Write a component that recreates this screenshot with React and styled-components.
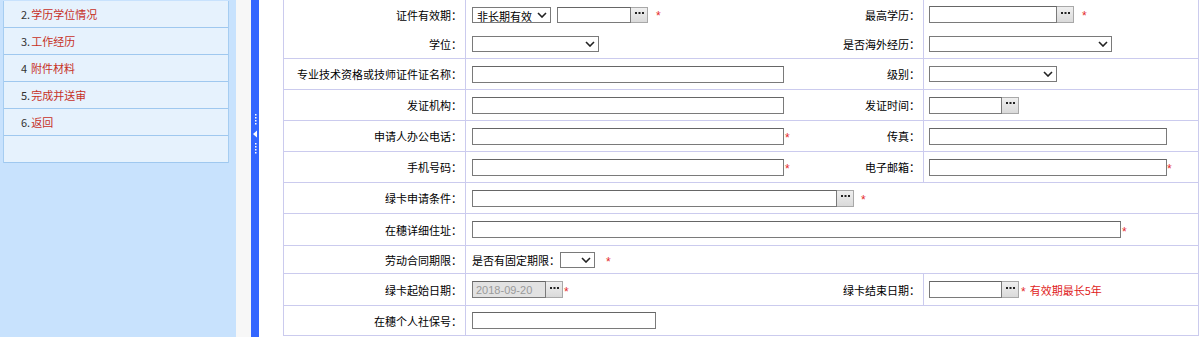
import React from "react";
import styled, { createGlobalStyle } from "styled-components";

const GlobalStyle = createGlobalStyle`
  html, body, #root {
    margin: 0;
    padding: 0;
    height: 100%;
  }
  body {
    background: #fff;
    font-family: "SimSun", "Noto Sans CJK SC", "Liberation Sans", sans-serif;
    font-size: 11px;
    color: #000;
    overflow: hidden;
  }
  * {
    box-sizing: border-box;
  }
`;

const Page = styled.div`
  display: flex;
  height: 337px;
`;

const SidePanel = styled.div`
  width: 236px;
  flex-shrink: 0;
  background: #c8e2fd;
  padding-left: 3px;
`;

const Menu = styled.ul`
  list-style: none;
  margin: 1px 0 0;
  padding: 0;
  width: 226px;
  border-left: 1px solid #a6cdf1;
  border-right: 1px solid #a6cdf1;
`;

const MenuItem = styled.li`
  height: 27px;
  display: flex;
  align-items: center;
  padding-left: 17px;
  background: #e6f2fd;
  border-bottom: 1px solid #9fc8ef;
  cursor: pointer;
`;

const MenuNo = styled.span`
  color: #333;
  margin-right: ${(p) => (p.$wide ? 4 : 1)}px;
`;

const MenuText = styled.span`
  color: #c6301f;
`;

const GrayStrip = styled.div`
  width: 15px;
  flex-shrink: 0;
  background: #f7f7f7;
`;

const Splitter = styled.div`
  width: 8px;
  flex-shrink: 0;
  background: #3366ff;
  display: flex;
  flex-direction: column;
  align-items: center;
  padding-top: 114px;
`;

const Main = styled.div`
  flex: 1;
  padding-left: 24px;
`;

const FormGrid = styled.div`
  width: 916px;
  display: grid;
  grid-template-columns: 182px 325px 133px 1fr;
  grid-template-rows: 29px 30px 31px 31px 31px 31px 31px 32px 28px 32px 30px;
  border-left: 1px solid #cbcbee;
  border-right: 1px solid #cbcbee;
`;

const Label = styled.div`
  display: flex;
  align-items: center;
  justify-content: flex-end;
  padding-right: 3px;
  border-right: 1px solid #cbcbee;
  border-bottom: ${(p) => (p.$noLine ? "none" : "1px solid #cbcbee")};
  white-space: nowrap;
`;

const Field = styled.div`
  display: flex;
  align-items: center;
  padding-left: ${(p) => (p.$right ? 5 : 6)}px;
  grid-column: span ${(p) => p.$span || 1};
  border-bottom: ${(p) => (p.$noLine ? "none" : "1px solid #cbcbee")};
  white-space: nowrap;
`;

const TextInput = styled.input`
  width: ${(p) => p.$w}px;
  height: ${(p) => p.$h || 17}px;
  margin: 0;
  padding: 0 3px;
  border: 1px solid #7a7a7a;
  border-top-color: #666;
  border-radius: 0;
  font-family: "Liberation Sans", sans-serif;
  font-size: 11px;
  color: #9a9a9a;
  background: ${(p) => (p.disabled ? "#e2e2e2" : "#fff")};
  outline: none;
`;

const PickButton = styled.button`
  width: 17px;
  height: ${(p) => p.$h || 17}px;
  margin: 0;
  padding: 0 0 4px;
  border: 1px solid #a8a8a8;
  border-left: none;
  border-radius: 0;
  background: linear-gradient(#efefef, #dadada);
  display: flex;
  align-items: center;
  justify-content: center;
  cursor: pointer;
`;

const SelectBox = styled.span`
  position: relative;
  display: inline-flex;
  width: ${(p) => p.$w}px;
  height: 16px;
`;

const Select = styled.select`
  appearance: none;
  width: 100%;
  height: 100%;
  margin: 0;
  padding: 0 0 0 4px;
  border: 1px solid #7a7a7a;
  border-radius: 0;
  background: #fff;
  font-family: inherit;
  font-size: 11px;
  color: #000;
  outline: none;
`;

const Chevron = styled.svg`
  position: absolute;
  right: 4px;
  top: 5px;
  pointer-events: none;
`;

const Req = styled.span`
  color: #e42a2a;
  font-family: "Liberation Sans", sans-serif;
  font-size: 12px;
  margin-left: ${(p) => p.$gap || 0}px;
  line-height: 1;
  padding-top: ${(p) => (p.$low ? 4 : 2)}px;
`;

const Note = styled.span`
  color: #e01b1b;
  margin-left: 4px;
`;

const Gap = styled.span`
  width: ${(p) => p.$w}px;
`;

const Grip = () => (
  <svg width="8" height="42" viewBox="0 0 8 42">
    {[0, 3, 6, 9].map((y) => (
      <rect key={"a" + y} x="4" y={y} width="1.5" height="1.5" fill="#fff" />
    ))}
    <polygon points="2,20 6,16.5 6,23.5" fill="#fff" />
    {[29, 32, 35, 38].map((y) => (
      <rect key={"b" + y} x="4" y={y} width="1.5" height="1.5" fill="#fff" />
    ))}
  </svg>
);

const Dots = () => (
  <svg width="9" height="2" viewBox="0 0 9 2">
    <rect x="0" y="0" width="2" height="2" fill="#222" />
    <rect x="3.5" y="0" width="2" height="2" fill="#222" />
    <rect x="7" y="0" width="2" height="2" fill="#222" />
  </svg>
);

const Dropdown = ({ w, value }) => (
  <SelectBox $w={w}>
    <Select defaultValue={value || ""}>
      <option value={value || ""}>{value || ""}</option>
    </Select>
    <Chevron width="10" height="6" viewBox="0 0 10 6">
      <polyline points="1,1 5,5 9,1" fill="none" stroke="#222" strokeWidth="1.6" />
    </Chevron>
  </SelectBox>
);

const Picker = ({ w, h, value, disabled }) => (
  <>
    <TextInput $w={w} $h={h} defaultValue={value} disabled={disabled} />
    <PickButton type="button" $h={h}>
      <Dots />
    </PickButton>
  </>
);

const menu = [
  ["2.", "学历学位情况"],
  ["3.", "工作经历"],
  ["4", "附件材料"],
  ["5.", "完成并送审"],
  ["6.", "返回"],
];

const App = () => {
  return (
    <>
      <GlobalStyle />
      <Page>
        <SidePanel>
          <Menu>
            {menu.map(([no, text]) => (
              <MenuItem key={no}>
                <MenuNo $wide={!no.includes(".")}>{no}</MenuNo>
                <MenuText>{text}</MenuText>
              </MenuItem>
            ))}
            <MenuItem />
          </Menu>
        </SidePanel>
        <GrayStrip />
        <Splitter>
          <Grip />
        </Splitter>
        <Main>
          <FormGrid>
            <Label $noLine>证件有效期：</Label>
            <Field $noLine>
              <Dropdown w={79} value="非长期有效" />
              <Gap $w={6} />
              <Picker w={74} h={16} />
              <Req $gap={8}>*</Req>
            </Field>
            <Label $noLine>最高学历：</Label>
            <Field $noLine $right>
              <Picker w={128} />
              <Req $gap={8}>*</Req>
            </Field>

            <Label>学位：</Label>
            <Field>
              <Dropdown w={127} />
            </Field>
            <Label>是否海外经历：</Label>
            <Field $right>
              <Dropdown w={183} />
            </Field>

            <Label>专业技术资格或技师证件证名称：</Label>
            <Field>
              <TextInput $w={312} />
            </Field>
            <Label>级别：</Label>
            <Field $right>
              <Dropdown w={128} />
            </Field>

            <Label>发证机构：</Label>
            <Field>
              <TextInput $w={312} />
            </Field>
            <Label>发证时间：</Label>
            <Field $right>
              <Picker w={73} />
            </Field>

            <Label>申请人办公电话：</Label>
            <Field>
              <TextInput $w={312} />
              <Req $gap={1} $low>*</Req>
            </Field>
            <Label>传真：</Label>
            <Field $right>
              <TextInput $w={238} />
            </Field>

            <Label>手机号码：</Label>
            <Field>
              <TextInput $w={312} />
              <Req $gap={1} $low>*</Req>
            </Field>
            <Label>电子邮箱：</Label>
            <Field $right>
              <TextInput $w={238} />
              <Req $gap={0} $low>*</Req>
            </Field>

            <Label>绿卡申请条件：</Label>
            <Field $span={3}>
              <Picker w={365} />
              <Req $gap={7} $low>*</Req>
            </Field>

            <Label>在穗详细住址：</Label>
            <Field $span={3}>
              <TextInput $w={649} />
              <Req $gap={1} $low>*</Req>
            </Field>

            <Label>劳动合同期限：</Label>
            <Field $span={3}>
              <span>是否有固定期限：</span>
              <Dropdown w={35} />
              <Req $gap={11} $low>*</Req>
            </Field>

            <Label>绿卡起始日期：</Label>
            <Field>
              <Picker w={74} value="2018-09-20" disabled />
              <Req $gap={1} $low>*</Req>
            </Field>
            <Label>绿卡结束日期：</Label>
            <Field $right>
              <Picker w={73} />
              <Req $gap={2} $low>*</Req>
              <Note>有效期最长5年</Note>
            </Field>

            <Label>在穗个人社保号：</Label>
            <Field $span={3}>
              <TextInput $w={184} />
            </Field>
          </FormGrid>
        </Main>
      </Page>
    </>
  );
};

export default App;
